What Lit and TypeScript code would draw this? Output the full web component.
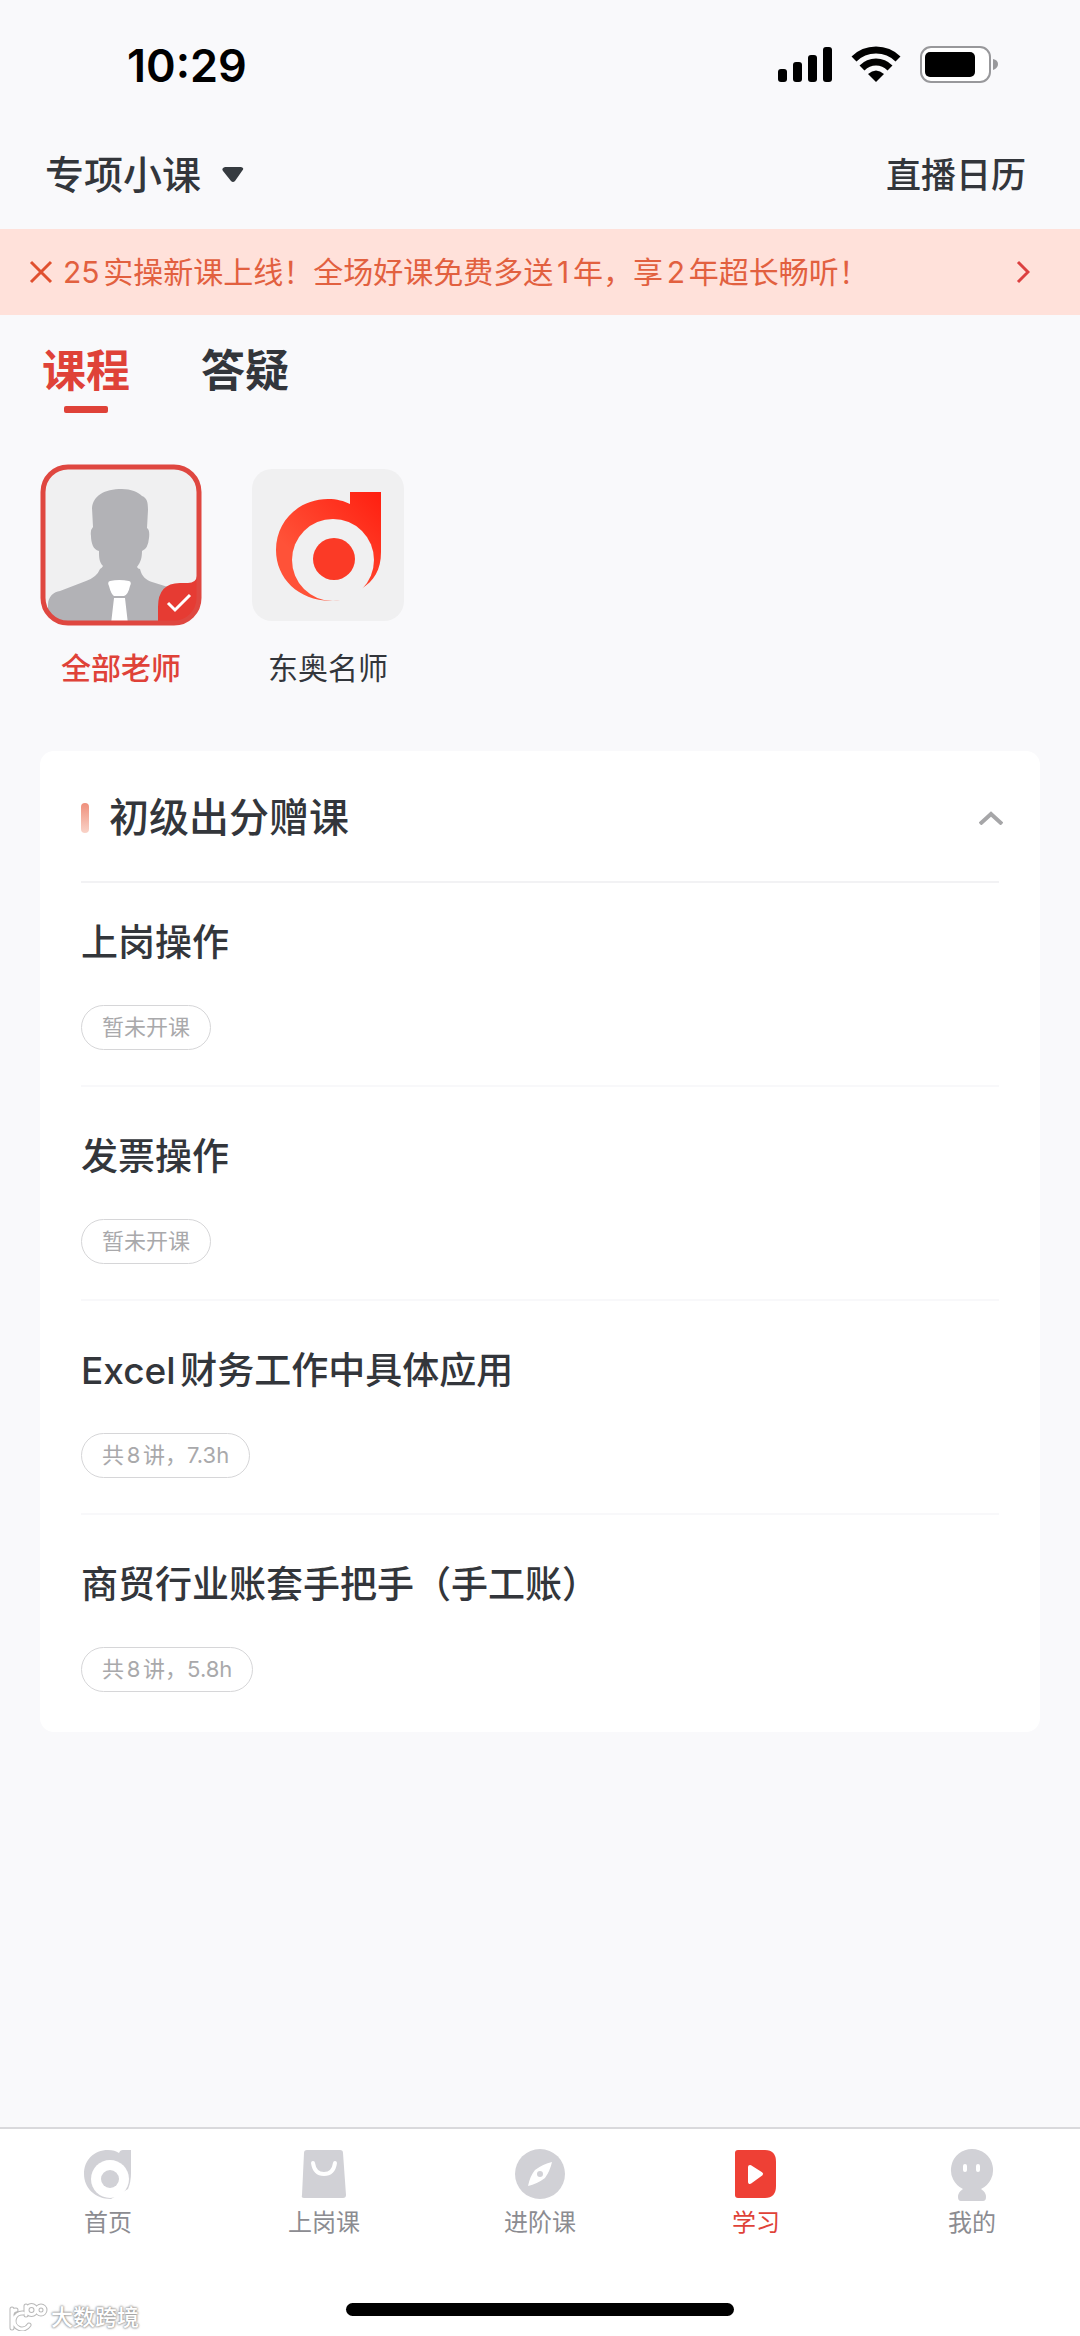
import { LitElement, html, css, svg } from "lit";
import { customElement, state } from "lit/decorators.js";

interface Course {
  title: string;
  note: string;
}

const COURSES: Course[] = [
  { title: "上岗操作", note: "暂未开课" },
  { title: "发票操作", note: "暂未开课" },
  { title: "Excel财务工作中具体应用", note: "共8讲，7.3h" },
  { title: "商贸行业账套手把手（手工账）", note: "共8讲，5.8h" },
];

const homeIcon = svg`
  <path fill="#d1d1d6" d="M25 1C30 1 33 2 36 4Q37 1 40 1H48V24Q48 33 45 40L28 50C12 50 1 39 1 25C1 11 11 1 25 1Z"/>
  <circle cx="27" cy="30" r="19" fill="#fff"/>
  <circle cx="27" cy="30" r="9" fill="#d1d1d6"/>`;

const bagIcon = svg`
  <path fill="#d1d1d6" d="M8 1H41Q44 1 44 4L47 46Q47 49 44 49H5Q2 49 3 46L5 4Q5 1 8 1Z"/>
  <path fill="none" stroke="#fff" stroke-width="4" stroke-linecap="round" d="M14 14C15 21 19 25 25 25S35 21 36 14"/>`;

const compassIcon = svg`
  <circle cx="25" cy="25" r="25" fill="#d1d1d6"/>
  <path fill="#fff" fill-rule="evenodd" d="M13 37Q15 27 20 21Q28 15 37 13Q35 22 30 29Q22 35 13 37ZM22 25A3 3 0 1 0 28 25A3 3 0 1 0 22 25Z"/>`;

const studyIcon = svg`
  <path fill="#ee4035" d="M7 1H34Q45 1 45 13V37Q45 49 34 49H7Q4 49 4 46V4Q4 1 7 1Z"/>
  <path fill="#fff" stroke="#fff" stroke-width="4" stroke-linejoin="round" d="M19 18L30 25L19 33Z"/>`;

const meIcon = svg`
  <path fill="#d1d1d6" d="M25 0A21 21 0 0 1 34 40Q39 43 39 48Q39 52 36 52H14Q11 52 11 48Q11 43 16 40A21 21 0 0 1 25 0Z"/>
  <rect x="16" y="15" width="4" height="8" rx="2" fill="#fff"/>
  <rect x="29" y="15" width="4" height="8" rx="2" fill="#fff"/>`;

const NAV = [
  { label: "首页", icon: homeIcon },
  { label: "上岗课", icon: bagIcon },
  { label: "进阶课", icon: compassIcon },
  { label: "学习", icon: studyIcon },
  { label: "我的", icon: meIcon },
];

@customElement("app-root")
export class AppRoot extends LitElement {
  static styles = css`
    :host {
      display: flex;
      flex-direction: column;
      min-height: 100vh;
      background: #f9f9fb;
      color: #33363b;
      font-family: Inter, "Noto Sans CJK SC", sans-serif;
      text-autospace: normal;
    }
    * {
      box-sizing: border-box;
    }
    svg {
      display: block;
      flex: none;
    }
    button {
      border: 0;
      margin: 0;
      padding: 0;
      background: none;
      color: inherit;
      font: inherit;
      cursor: pointer;
    }
    a {
      color: inherit;
      text-decoration: none;
    }
    h2,
    h3,
    p,
    ul {
      margin: 0;
      padding: 0;
      list-style: none;
    }
    .status {
      display: flex;
      align-items: center;
      justify-content: space-between;
      height: 130px;
      padding: 0 82px 0 127px;
      color: #000;
      font-size: 45px;
      font-weight: 600;
    }
    .top {
      display: flex;
      align-items: center;
      justify-content: space-between;
      height: 99px;
      padding: 0 54px 10px 45px;
      font-weight: 500;
    }
    .picker {
      display: flex;
      align-items: center;
      gap: 21px;
      font-size: 39px;
      line-height: 56px;
    }
    .calendar {
      font-size: 35px;
      line-height: 56px;
    }
    .banner {
      display: flex;
      align-items: center;
      height: 86px;
      padding: 0 50px 0 29px;
      background: #ffe1da;
      color: #e2603f;
      font-size: 30px;
      line-height: 44px;
    }
    .banner-text {
      flex: 1;
      margin-left: 10px;
    }
    .tabs {
      display: flex;
      gap: 67px;
      padding: 24px 40px 0;
    }
    .tab {
      display: flex;
      flex-direction: column;
      align-items: center;
      gap: 3px;
      padding: 0 2px;
      font-size: 44px;
      font-weight: 600;
      line-height: 64px;
    }
    .tab::after {
      content: "";
      width: 44px;
      height: 7px;
      border-radius: 2px;
    }
    .tab.on {
      color: #df4238;
    }
    .tab.on::after {
      background: #df4238;
    }
    .teachers {
      display: flex;
      gap: 45px;
      padding: 51px 40px 0;
    }
    .teacher {
      display: flex;
      flex-direction: column;
      align-items: center;
      gap: 20px;
      font-size: 30px;
      line-height: 44px;
    }
    .teacher.on {
      color: #df4238;
      font-weight: 500;
    }
    .card {
      margin: 61px 40px 0;
      padding: 0 41px;
      border-radius: 14px;
      background: #fff;
    }
    .card-head {
      display: flex;
      align-items: center;
      width: 100%;
      height: 132px;
      padding-top: 4px;
      border-bottom: 2px solid #f2f2f4;
    }
    .mark {
      width: 8px;
      height: 30px;
      margin-right: 20px;
      border-radius: 4px;
      background: linear-gradient(#ef8f7b, #f9d3c8);
    }
    .card-title {
      flex: 1;
      font-size: 40px;
      font-weight: 500;
      line-height: 56px;
      text-align: left;
    }
    .head-icon {
      margin-right: -4px;
    }
    .course {
      display: flex;
      flex-direction: column;
      align-items: flex-start;
      gap: 36px;
      padding: 44px 0 35px;
      border-bottom: 2px solid #f8f8fa;
    }
    .course:first-child {
      padding-top: 34px;
    }
    .course:last-child {
      padding-bottom: 40px;
      border-bottom: 0;
    }
    .course-title {
      font-size: 37px;
      font-weight: 500;
      line-height: 52px;
    }
    .pill {
      padding: 0 20px;
      border: 1px solid #d6d6d8;
      border-radius: 24px;
      color: #a9a9ab;
      font-size: 22px;
      line-height: 43px;
    }
    .bottom {
      position: relative;
      margin-top: auto;
      border-top: 2px solid #d9d9dc;
      background: #fff;
    }
    .nav {
      display: grid;
      grid-template-columns: repeat(5, 1fr);
      padding-top: 20px;
    }
    .nav-item {
      display: flex;
      flex-direction: column;
      align-items: center;
      gap: 4px;
      color: #8c8c91;
      font-size: 24px;
      line-height: 36px;
    }
    .nav-item.on {
      color: #df4238;
    }
    .indicator {
      width: 36%;
      height: 13px;
      margin: 62px auto 20px;
      border-radius: 7px;
      background: #000;
    }
    .stamp {
      position: absolute;
      left: 8px;
      bottom: 3px;
      display: flex;
      align-items: center;
      gap: 3px;
      color: #fff;
      font-size: 22px;
      font-weight: 500;
      line-height: 32px;
      text-shadow: 0 0 2px #999, 0 0 2px #999, 0 0 3px #aaa;
    }
  `;

  @state() private open = true;
  @state() private tab = 0;
  @state() private bannerShown = true;

  private renderBanner() {
    return html`
      <div class="banner">
        <button aria-label="关闭" @click=${() => (this.bannerShown = false)}>
          <svg width="24" height="24" viewBox="0 0 24 24" fill="none" stroke="#e0502f" stroke-width="3">
            <path d="M2 2L22 22M22 2L2 22" />
          </svg>
        </button>
        <p class="banner-text">25实操新课上线！全场好课免费多送1年，享2年超长畅听！</p>
        <svg width="14" height="24" viewBox="0 0 14 24" fill="none" stroke="#dc4040" stroke-width="3">
          <path d="M2 2L12 12L2 22" />
        </svg>
      </div>
    `;
  }

  render() {
    return html`
      <div class="status">
        <span>10:29</span>
        <svg width="221" height="38" viewBox="0 0 221 38">
          <rect x="1" y="23" width="9" height="13" rx="3" />
          <rect x="16" y="16" width="9" height="20" rx="3" />
          <rect x="31" y="9" width="9" height="27" rx="3" />
          <rect x="46" y="1" width="9" height="35" rx="3" />
          <path fill="none" stroke="#000" stroke-width="7" d="M77 13C89 1 109 1 121 13M85 22C93 14 105 14 113 22" />
          <path d="M91 28Q99 21 107 28L99 36Z" />
          <rect x="144" y="1" width="69" height="35" rx="10" fill="#fff" stroke="#98989b" stroke-width="2" />
          <rect x="148" y="6" width="50" height="25" rx="5" />
          <path fill="#98989b" d="M216 13Q221 14 221 18T216 24Z" />
        </svg>
      </div>
      <div class="top">
        <button class="picker">
          专项小课
          <svg width="22" height="16" viewBox="0 0 22 16">
            <path fill="#363b40" d="M3 0H19Q23 1 20 4L13 14Q11 16 9 14L1 4Q-1 1 3 0Z" />
          </svg>
        </button>
        <a class="calendar" href="#calendar">直播日历</a>
      </div>
      ${this.bannerShown ? this.renderBanner() : null}
      <div class="tabs">
        ${["课程", "答疑"].map(
          (name, i) => html`<button class="tab ${i === this.tab ? "on" : ""}" @click=${() => (this.tab = i)}>${name}</button>`
        )}
      </div>
      <div class="teachers">
        <button class="teacher on">
          <svg width="162" height="162" viewBox="0 0 162 162">
            <defs>
              <clipPath id="photo"><rect x="3" y="3" width="156" height="156" rx="24" /></clipPath>
            </defs>
            <g clip-path="url(#photo)">
              <path fill="#f0f0f1" d="M0 0H162V162H0Z" />
              <path fill="#b2b2b6" d="M82 25C91 25 98 28 102 32C107 34 108 38 108 46L107 64Q110 66 109 74Q108 85 102 87C102 93 101 98 97 103Q98 105 100 105C102 113 106 116 112 118L128 123Q152 130 154 145V162H8V141C8 132 14 128 20 127L46 117Q57 113 60 105Q62 104 63 102C59 98 59 93 59 87C53 86 51 78 51 72Q50 66 53 63L52 44C53 32 64 25 82 25Z" />
              <path fill="#fff" d="M70 117Q79 115 89 117Q92 118 90 122Q88 131 84 132H74Q71 130 69 122Q67 118 70 117ZM74 134H85L88 160H71Z" />
              <path fill="#e63b33" d="M118 162V143Q118 119 140 119H148Q156 119 157 112H162V162Z" />
            </g>
            <rect x="3" y="3" width="156" height="156" rx="25" fill="none" stroke="#df4740" stroke-width="5" />
            <path fill="none" stroke="#fff" stroke-width="3" d="M128 139L135 146L150 131" />
          </svg>
          全部老师
        </button>
        <button class="teacher">
          <svg width="162" height="162" viewBox="0 0 162 162">
            <defs>
              <linearGradient id="flame" x1="0" y1="1" x2="1" y2="0">
                <stop offset="0.3" stop-color="#ff5238" />
                <stop offset="1" stop-color="#ff1f10" />
              </linearGradient>
            </defs>
            <rect x="5" y="5" width="152" height="152" rx="20" fill="#f0f0f1" />
            <path fill="url(#flame)" d="M81 35C90 35 97 37 103 40V28H134V88C134 106 127 117 114 125L93 136C56 141 29 117 29 86C29 57 52 35 81 35Z" />
            <circle cx="86" cy="96" r="41" fill="#f0f0f1" />
            <circle cx="87" cy="95" r="21" fill="#fb3a26" />
          </svg>
          东奥名师
        </button>
      </div>
      <section class="card">
        <button class="card-head" aria-expanded=${this.open} @click=${() => (this.open = !this.open)}>
          <span class="mark"></span>
          <span class="card-title">初级出分赠课</span>
          <svg class="head-icon" width="24" height="14" viewBox="0 0 24 14" fill="none" stroke="#a6a6a8" stroke-width="4">
            <path d=${this.open ? "M1 13L12 3L23 13" : "M1 1L12 11L23 1"} />
          </svg>
        </button>
        ${this.open
          ? html`<ul>
              ${COURSES.map(
                (c) => html`<li class="course">
                  <h3 class="course-title">${c.title}</h3>
                  <span class="pill">${c.note}</span>
                </li>`
              )}
            </ul>`
          : null}
      </section>
      <footer class="bottom">
        <nav class="nav">
          ${NAV.map(
            (n, i) => html`<a class="nav-item ${i === 3 ? "on" : ""}" href="#${i}">
              <svg width="50" height="52" viewBox="0 0 50 52">${n.icon}</svg>
              ${n.label}
            </a>`
          )}
        </nav>
        <div class="indicator"></div>
        <div class="stamp">
          <svg width="40" height="28" viewBox="0 0 40 28" fill="none" stroke-linecap="round" stroke-linejoin="round">
            <path stroke="#b8b8b8" stroke-width="5" d="M4 6V25M4 11Q5 7 8 7M15 10A8 8 0 1 0 21 22M18 3V12M19 7A4 4 0 1 0 28 7A4 4 0 1 0 19 7M29 7A4 4 0 1 0 37 7A4 4 0 1 0 29 7" />
            <path stroke="#fff" stroke-width="3" d="M4 6V25M4 11Q5 7 8 7M15 10A8 8 0 1 0 21 22M18 3V12M19 7A4 4 0 1 0 28 7A4 4 0 1 0 19 7M29 7A4 4 0 1 0 37 7A4 4 0 1 0 29 7" />
          </svg>
          大数跨境
        </div>
      </footer>
    `;
  }
}
